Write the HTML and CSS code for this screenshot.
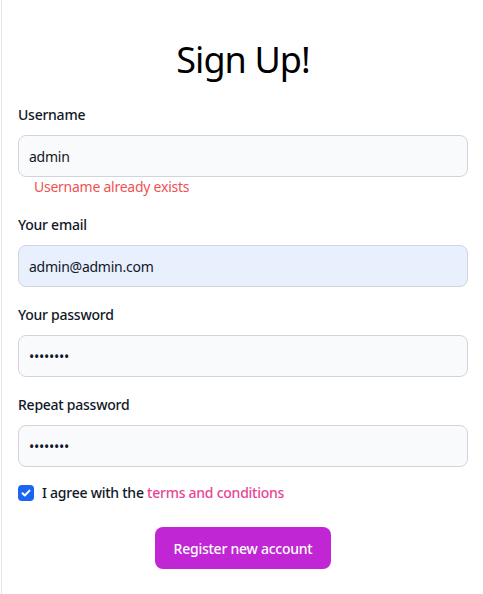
FILE: index.html
```html
<!DOCTYPE html>
<html lang="en">
<head>
<meta charset="utf-8">
<title>Sign Up</title>
<link rel="stylesheet" href="styles.css">
</head>
<body>
<div class="page">
  <form class="form">
    <h1 class="title">Sign Up!</h1>
    <div class="field field-error">
      <label class="label" for="username">Username</label>
      <input class="input" id="username" type="text" value="admin">
      <p class="error">Username already exists</p>
    </div>
    <div class="field">
      <label class="label" for="email">Your email</label>
      <input class="input input-autofill" id="email" type="email" value="admin@admin.com">
    </div>
    <div class="field">
      <label class="label" for="password">Your password</label>
      <input class="input" id="password" type="password" value="password">
    </div>
    <div class="field">
      <label class="label" for="repeat">Repeat password</label>
      <input class="input" id="repeat" type="password" value="password">
    </div>
    <div class="agree">
      <input class="checkbox" id="terms" type="checkbox" checked>
      <label class="agree-label" for="terms">I agree with the <a class="link" href="#">terms and conditions</a></label>
    </div>
    <div class="actions">
      <button class="button" type="button">Register new account</button>
    </div>
  </form>
</div>
</body>
</html>
```
FILE: styles.css
```css
* { box-sizing: border-box; }
html, body { margin: 0; padding: 0; background: #fff; }
body {
  font-family: "Noto Sans", "Open Sans", sans-serif;
  color: #111827;
  padding-left: 1px;
  letter-spacing: -0.25px;
}
.page {
  border-left: 1px solid #e5e7eb;
  min-height: 594px;
  padding: 0 15px 0 16px;
}
.form { display: flex; flex-direction: column; }
.title {
  margin: 40px 0 25px;
  font-size: 36px;
  line-height: 40px;
  font-weight: 400;
  letter-spacing: -0.9px;
  text-align: center;
  color: #000;
}
.field { display: flex; flex-direction: column; margin-bottom: 18px; }
.label {
  font-size: 14px;
  line-height: 20px;
  font-weight: 500;
  margin-bottom: 10px;
  color: #111827;
}
.input {
  display: block;
  width: 100%;
  height: 42px;
  padding: 10px;
  font-family: inherit;
  font-size: 14px;
  line-height: 20px;
  letter-spacing: -0.25px;
  color: #111827;
  background: #f9fafb;
  border: 1px solid #d1d5db;
  border-radius: 8px;
  outline: none;
}
.input-autofill { background: #e8f0fe; }
.error {
  margin: 0 0 0 16px;
  font-size: 14px;
  line-height: 20px;
  color: #f05252;
}
.agree {
  display: flex;
  align-items: center;
  gap: 8px;
  height: 20px;
  margin-top: -2px;
}
.checkbox {
  appearance: none;
  -webkit-appearance: none;
  margin: 0;
  width: 16px;
  height: 16px;
  border-radius: 4px;
  background-color: #1c64f2;
  background-image: url("data:image/svg+xml,%3Csvg xmlns='http://www.w3.org/2000/svg' viewBox='0 0 16 16'%3E%3Cpath d='M4.5 8.2l2.3 2.3 4.7-4.9' fill='none' stroke='white' stroke-width='2' stroke-linecap='round' stroke-linejoin='round'/%3E%3C/svg%3E");
  background-size: 100% 100%;
}
.agree-label { font-size: 14px; line-height: 20px; font-weight: 500; color: #111827; }
.link { color: #e74694; text-decoration: none; }
.actions { display: flex; justify-content: center; margin-top: 24px; }
.button {
  height: 42px;
  padding: 0 19px;
  font-family: inherit;
  font-size: 14px;
  font-weight: 500;
  letter-spacing: -0.25px;
  color: #fff;
  background: #c026d3;
  border: none;
  border-radius: 8px;
}
```
